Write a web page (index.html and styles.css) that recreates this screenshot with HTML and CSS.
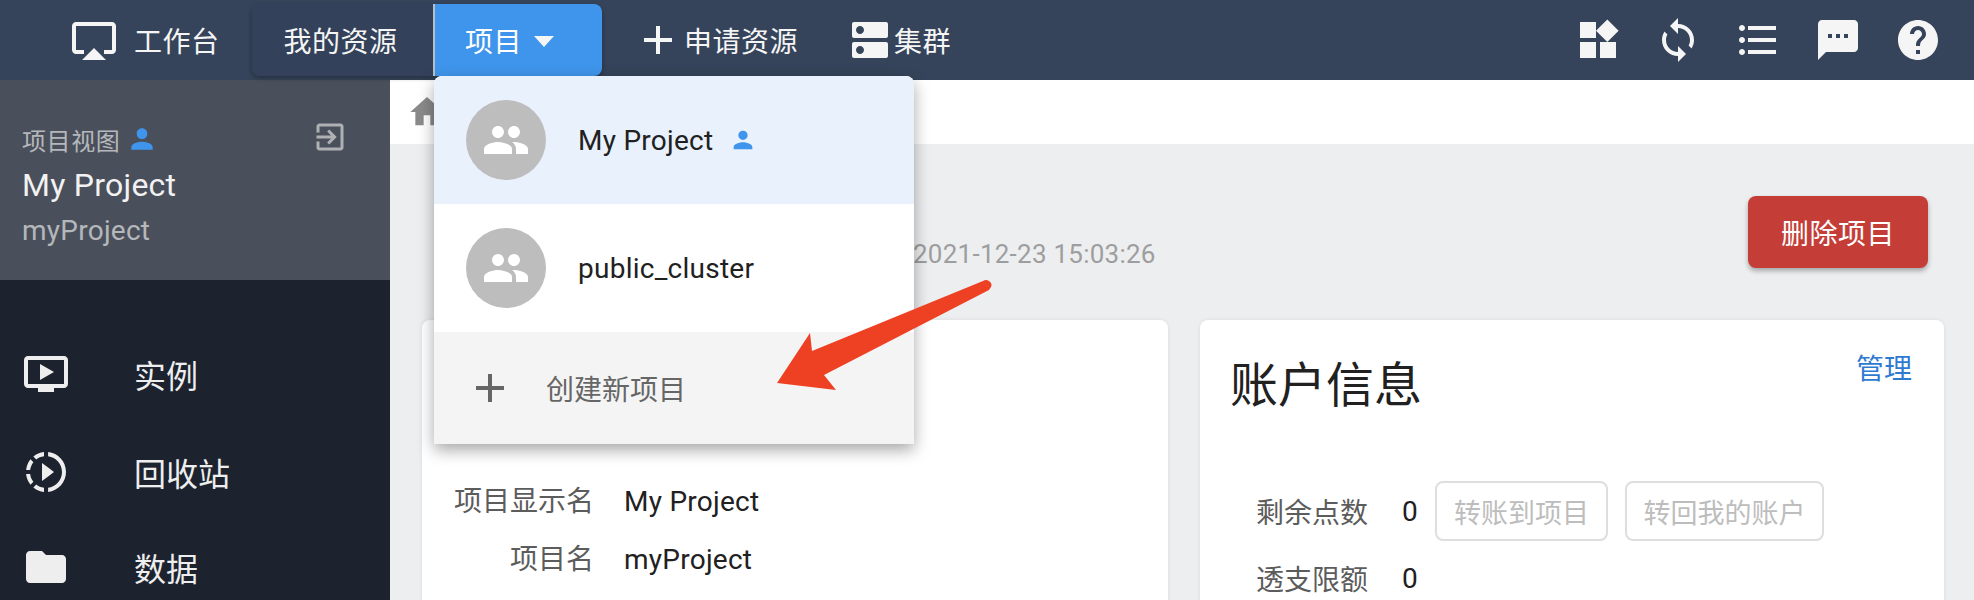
FILE: index.html
```html
<!DOCTYPE html>
<html lang="zh">
<head>
<meta charset="utf-8">
<title>项目视图</title>
<link rel="stylesheet" href="styles.css">
</head>
<body>
<div class="app">
  <header class="nav">
    <a class="nav-home"><svg class="ic48" viewBox="0 0 24 24"><path d="M6 22h12l-6-6zM21 3H3c-1.1 0-2 .9-2 2v12c0 1.1.9 2 2 2h4v-2H3V5h18v12h-4v2h4c1.1 0 2-.9 2-2V5c0-1.1-.9-2-2-2z"/></svg><span>工作台</span></a>
    <div class="nav-tabs">
      <a class="tab">我的资源</a>
      <div class="tab tab-active">项目<i class="caret"></i>
        <div class="menu">
          <div class="menu-item current">
            <span class="avatar"><svg class="ic48" viewBox="0 0 24 24"><path d="M16 11c1.66 0 2.99-1.34 2.99-3S17.66 5 16 5c-1.66 0-3 1.34-3 3s1.34 3 3 3zm-8 0c1.66 0 2.99-1.34 2.99-3S9.66 5 8 5C6.34 5 5 6.34 5 8s1.34 3 3 3zm0 2c-2.33 0-7 1.17-7 3.5V19h14v-2.5c0-2.33-4.67-3.5-7-3.5zm8 0c-.29 0-.62.02-.97.05 1.16.84 1.97 1.97 1.97 3.45V19h6v-2.5c0-2.33-4.67-3.5-7-3.5z"/></svg></span>
            <span class="latin">My Project</span>
            <svg class="person person-menu" viewBox="0 0 24 24"><path d="M12 12c2.21 0 4-1.79 4-4s-1.79-4-4-4-4 1.79-4 4 1.79 4 4 4zm0 2c-2.67 0-8 1.34-8 4v2h16v-2c0-2.66-5.33-4-8-4z"/></svg>
          </div>
          <div class="menu-item">
            <span class="avatar"><svg class="ic48" viewBox="0 0 24 24"><path d="M16 11c1.66 0 2.99-1.34 2.99-3S17.66 5 16 5c-1.66 0-3 1.34-3 3s1.34 3 3 3zm-8 0c1.66 0 2.99-1.34 2.99-3S9.66 5 8 5C6.34 5 5 6.34 5 8s1.34 3 3 3zm0 2c-2.33 0-7 1.17-7 3.5V19h14v-2.5c0-2.33-4.67-3.5-7-3.5zm8 0c-.29 0-.62.02-.97.05 1.16.84 1.97 1.97 1.97 3.45V19h6v-2.5c0-2.33-4.67-3.5-7-3.5z"/></svg></span>
            <span class="latin">public_cluster</span>
          </div>
          <div class="menu-create">
            <svg class="ic48" viewBox="0 0 24 24"><path d="M19 13h-6v6h-2v-6H5v-2h6V5h2v6h6v2z"/></svg>
            <span>创建新项目</span>
          </div>
        </div>
      </div>
    </div>
    <a class="nav-link nav-apply"><svg class="ic48" viewBox="0 0 24 24"><path d="M19 13h-6v6h-2v-6H5v-2h6V5h2v6h6v2z"/></svg><span>申请资源</span></a>
    <a class="nav-link nav-cluster"><svg class="ic48" viewBox="0 0 24 24"><path d="M20 13H4c-.55 0-1 .45-1 1v6c0 .55.45 1 1 1h16c.55 0 1-.45 1-1v-6c0-.55-.45-1-1-1zM7 19c-1.1 0-2-.9-2-2s.9-2 2-2 2 .9 2 2-.9 2-2 2zM20 3H4c-.55 0-1 .45-1 1v6c0 .55.45 1 1 1h16c.55 0 1-.45 1-1V4c0-.55-.45-1-1-1zM7 9c-1.1 0-2-.9-2-2s.9-2 2-2 2 .9 2 2-.9 2-2 2z"/></svg><span>集群</span></a>
    <div class="nav-tools">
      <a class="tool"><svg class="ic48" viewBox="0 0 24 24"><path d="M13 13v8h8v-8h-8zM3 21h8v-8H3v8zM3 3v8h8V3H3zm13.66-1.31L11 7.34 16.66 13l5.66-5.66-5.66-5.65z"/></svg></a>
      <a class="tool"><svg class="ic48" viewBox="0 0 24 24"><path d="M12 4V1L8 5l4 4V6c3.31 0 6 2.69 6 6 0 1.01-.25 1.97-.7 2.8l1.46 1.46C19.54 15.03 20 13.57 20 12c0-4.42-3.58-8-8-8zm0 14c-3.31 0-6-2.69-6-6 0-1.01.25-1.97.7-2.8L5.24 7.74C4.46 8.97 4 10.43 4 12c0 4.42 3.58 8 8 8v3l4-4-4-4v3z"/></svg></a>
      <a class="tool"><svg class="ic48" viewBox="0 0 24 24"><path d="M4 10.5c-.83 0-1.5.67-1.5 1.5s.67 1.5 1.5 1.5 1.5-.67 1.5-1.5-.67-1.5-1.5-1.5zm0-6c-.83 0-1.5.67-1.5 1.5S3.17 7.5 4 7.5 5.5 6.83 5.5 6 4.83 4.5 4 4.5zm0 12c-.83 0-1.5.68-1.5 1.5s.68 1.5 1.5 1.5 1.5-.68 1.5-1.5-.67-1.5-1.5-1.5zM7 19h14v-2H7v2zm0-6h14v-2H7v2zm0-8v2h14V5H7z"/></svg></a>
      <a class="tool"><svg class="ic48" viewBox="0 0 24 24"><path d="M20 2H4c-1.1 0-1.99.9-1.99 2L2 22l4-4h14c1.1 0 2-.9 2-2V4c0-1.1-.9-2-2-2zM9 11H7V9h2v2zm4 0h-2V9h2v2zm4 0h-2V9h2v2z"/></svg></a>
      <a class="tool"><svg class="ic48" viewBox="0 0 24 24"><path d="M12 2C6.48 2 2 6.48 2 12s4.48 10 10 10 10-4.48 10-10S17.52 2 12 2zm1 17h-2v-2h2v2zm2.07-7.75l-.9.92C13.45 12.9 13 13.5 13 15h-2v-.5c0-1.1.45-2.1 1.17-2.83l1.24-1.26c.37-.36.59-.86.59-1.41 0-1.1-.9-2-2-2s-2 .9-2 2H8c0-2.21 1.79-4 4-4s4 1.79 4 4c0 .88-.36 1.68-.93 2.25z"/></svg></a>
    </div>
  </header>

  <div class="body">
    <aside class="sidebar">
      <section class="side-head">
        <div class="side-view">
          <span>项目视图</span>
          <svg class="person person-side" viewBox="0 0 24 24"><path d="M12 12c2.21 0 4-1.79 4-4s-1.79-4-4-4-4 1.79-4 4 1.79 4 4 4zm0 2c-2.67 0-8 1.34-8 4v2h16v-2c0-2.66-5.33-4-8-4z"/></svg>
          <svg class="side-exit" viewBox="0 0 24 24"><path d="M10.09 15.59L11.5 17l5-5-5-5-1.41 1.41L12.67 11H3v2h9.67l-2.58 2.59zM19 3H5c-1.11 0-2 .9-2 2v4h2V5h14v14H5v-4H3v4c0 1.1.89 2 2 2h14c1.1 0 2-.9 2-2V5c0-1.1-.9-2-2-2z"/></svg>
        </div>
        <div class="side-title latin">My Project</div>
        <div class="side-sub latin">myProject</div>
      </section>
      <nav class="side-menu">
        <a class="side-item"><svg class="ic48" viewBox="0 0 24 24"><path d="M21 3H3c-1.11 0-2 .89-2 2v12c0 1.1.89 2 2 2h5v2h8v-2h5c1.1 0 1.99-.9 1.99-2L23 5c0-1.11-.9-2-2-2zm0 14H3V5h18v12zM16 11l-7 4V7z"/></svg><span>实例</span></a>
        <a class="side-item"><svg class="ic48" viewBox="0 0 24 24"><path d="M13.05 9.79L10 7.5v9l3.05-2.29L16 12zM11 4.07V2.05c-2.01.2-3.84 1-5.32 2.21L7.1 5.69c1.11-.86 2.44-1.44 3.9-1.62zM5.69 7.1L4.26 5.68C3.05 7.16 2.25 8.99 2.05 11h2.02c.18-1.46.76-2.79 1.62-3.9zM4.07 13H2.05c.2 2.01 1 3.84 2.21 5.32l1.43-1.43c-.86-1.1-1.44-2.43-1.62-3.89zm1.61 6.74C7.16 20.95 9 21.75 11 21.95v-2.02c-1.46-.18-2.79-.76-3.9-1.62l-1.42 1.43zM22 12c0 5.16-3.92 9.42-8.95 9.95v-2.02C16.97 19.41 20 16.05 20 12s-3.03-7.41-6.95-7.93V2.05C18.08 2.58 22 6.84 22 12z"/></svg><span>回收站</span></a>
        <a class="side-item"><svg class="ic48" viewBox="0 0 24 24"><path d="M10 4H4c-1.1 0-1.99.9-1.99 2L2 18c0 1.1.9 2 2 2h16c1.1 0 2-.9 2-2V8c0-1.1-.9-2-2-2h-8l-2-2z"/></svg><span>数据</span></a>
      </nav>
    </aside>

    <main class="content">
      <div class="crumbs"><svg class="home" viewBox="0 0 24 24"><path d="M10 20v-6h4v6h5v-8h3L12 3 2 12h3v8z"/></svg></div>
      <div class="page-head">
        <span class="date latin">2021-12-23 15:03:26</span>
        <button class="btn-danger">删除项目</button>
      </div>
      <div class="cards">
        <section class="card card-info">
          <dl class="info">
            <dt>项目显示名</dt><dd class="latin">My Project</dd>
            <dt>项目名</dt><dd class="latin">myProject</dd>
          </dl>
        </section>
        <section class="card card-account">
          <div class="card-head">
            <h2>账户信息</h2>
            <a class="manage">管理</a>
          </div>
          <div class="acct-row">
            <span class="acct-label">剩余点数</span><span class="acct-value">0</span>
            <button class="btn-off btn-to">转账到项目</button>
            <button class="btn-off btn-back">转回我的账户</button>
          </div>
          <div class="acct-row">
            <span class="acct-label">透支限额</span><span class="acct-value">0</span>
          </div>
        </section>
      </div>
    </main>
  </div>

  <svg class="arrow" viewBox="0 0 1974 600"><path d="M983 281 L812 351 L810 333 L777 383 L836 390 L824 375 L989 290 Q994 284 989 281 Q986 279 983 281Z"/></svg>
</div>
</body>
</html>
```
FILE: styles.css
```css
* { box-sizing: border-box; }
html, body { margin: 0; height: 100%; }
body {
  font-family: Roboto, "Noto Sans CJK SC", sans-serif;
  font-size: 28px;
  background: #edeef0;
  overflow: hidden;
}
.app { position: relative; height: 600px; overflow: hidden; display: flex; flex-direction: column; }
.ic48 { width: 48px; height: 48px; flex: none; fill: currentColor; display: block; }
.person { fill: #3f95eb; flex: none; display: block; }
.latin { letter-spacing: .25px; }

/* top bar */
.nav {
  height: 80px;
  flex: none;
  display: flex;
  align-items: center;
  background: #35445a;
  color: #f5f5f5;
  padding-left: 70px;
  position: relative;
  z-index: 3;
  letter-spacing: .5px;
}
.nav-home { display: flex; align-items: center; gap: 16px; width: 182px; }
.nav-tabs { display: flex; height: 72px; border-radius: 8px; box-shadow: 0 2px 5px rgba(0,0,0,.3); }
.tab { display: flex; align-items: center; height: 72px; background: #33425a; }
.tab:first-child { width: 181px; justify-content: center; padding-right: 4px; border-radius: 8px 0 0 8px; }
.tab-active {
  position: relative;
  width: 169px;
  padding-left: 30px;
  background: #3f95eb;
  border-left: 2px solid #b9bfc7;
  border-radius: 0 8px 8px 0;
  color: #fff;
}
.caret {
  width: 0;
  height: 0;
  margin-left: 12px;
  margin-top: 2px;
  border-left: 10px solid transparent;
  border-right: 10px solid transparent;
  border-top: 11px solid #f5f5f5;
}
.nav-link { display: flex; align-items: center; }
.nav-apply { margin-left: 32px; }
.nav-cluster { margin-left: 48px; }
.nav-apply span { margin-left: 2px; }
.nav-tools { display: flex; margin-left: auto; padding-right: 16px; }
.tool { width: 80px; height: 80px; display: flex; align-items: center; justify-content: center; }

/* project dropdown */
.menu {
  position: absolute;
  top: 72px;
  left: -1px;
  width: 480px;
  border-radius: 8px 8px 0 0;
  background: #fff;
  color: #212121;
  box-shadow: 0 6px 16px rgba(0,0,0,.35);
  overflow: hidden;
  letter-spacing: 0;
}
.menu-item { height: 128px; display: flex; align-items: center; padding-left: 32px; }
.menu-item.current { background: #e9f1fc; }
.avatar {
  width: 80px;
  height: 80px;
  margin-right: 32px;
  border-radius: 50%;
  background: #bdbdbd;
  color: #fff;
  display: flex;
  align-items: center;
  justify-content: center;
}
.person-menu { width: 28px; height: 28px; margin-left: 16px; }
.menu-create {
  height: 112px;
  display: flex;
  align-items: center;
  gap: 32px;
  padding-left: 32px;
  background: #f4f4f4;
  color: #666;
}

/* body */
.body { flex: 1; display: flex; min-height: 0; }
.sidebar { width: 390px; flex: none; background: #1c222e; color: #eee; }
.side-head { height: 200px; background: #4a505b; padding: 39px 0 0 22px; }
.side-view { display: flex; align-items: center; height: 40px; font-size: 24px; letter-spacing: .6px; color: #b5b7bb; }
.person-side { width: 32px; height: 32px; margin-left: 6px; }
.side-exit { width: 36px; height: 36px; margin-left: 154px; fill: #aeb0b4; display: block; transform: translateY(-2px); }
.side-title { font-size: 32px; line-height: 48px; margin-top: 2px; color: #f2f2f2; }
.side-sub { line-height: 44px; color: #b5b7bb; }
.side-menu { padding: 46px 0 0 22px; }
.side-item { height: 96px; display: flex; align-items: center; gap: 64px; font-size: 32px; }
.side-item:nth-child(2) { padding-top: 3px; }
.side-item:nth-child(3) { padding-top: 1px; }

/* content */
.content { flex: 1; min-width: 0; }
.crumbs { height: 64px; background: #fff; padding: 12px 0 0 17px; }
.home { width: 40px; height: 40px; fill: #8a8a8a; display: block; }
.page-head { height: 176px; display: flex; align-items: flex-start; padding: 52px 46px 0 523px; }
.date { margin-top: 38px; font-size: 26px; line-height: 40px; color: #9e9e9e; }
.btn-danger {
  width: 180px;
  height: 72px;
  margin-left: auto;
  border: 0;
  border-radius: 8px;
  background: #c43e37;
  color: #fff;
  font: inherit;
  letter-spacing: .5px;
  box-shadow: 0 3px 5px rgba(0,0,0,.3);
}
.cards { display: grid; grid-template-columns: 746px 744px; gap: 32px; padding-left: 32px; }
.card { background: #fff; border-radius: 8px 8px 0 0; height: 300px; box-shadow: 0 0 4px rgba(0,0,0,.08); }
.card-info { padding-top: 162px; }
.info { margin: 0; display: grid; grid-template-columns: 172px 1fr; column-gap: 30px; row-gap: 18px; line-height: 40px; }
.info dt { text-align: right; color: #5c5c5c; }
.info dd { margin: 0; color: #212121; }
.card-account { padding: 34px 32px 0; }
.card-head { display: flex; justify-content: space-between; align-items: flex-start; height: 127px; }
.card-head h2 { margin: 0 0 0 -2px; font-size: 48px; font-weight: 400; line-height: 64px; color: #212121; }
.manage { color: #2f7ad1; line-height: 36px; margin-top: -2px; }
.acct-row { display: flex; align-items: center; height: 60px; padding-left: 24px; margin-bottom: 7px; }
.acct-label { width: 112px; color: #5c5c5c; }
.acct-value { width: 33px; margin-left: 34px; color: #212121; }
.btn-off {
  height: 60px;
  padding: 0;
  margin-right: 17px;
  border: 2px solid #dedede;
  border-radius: 8px;
  background: #fff;
  color: #bdbdbd;
  font: inherit;
  font-size: 27px;
}
.btn-to { width: 173px; }
.btn-back { width: 199px; }

/* red annotation arrow */
.arrow { position: absolute; left: 0; top: 0; width: 1974px; height: 600px; z-index: 5; fill: #ee4023; pointer-events: none; }
```
